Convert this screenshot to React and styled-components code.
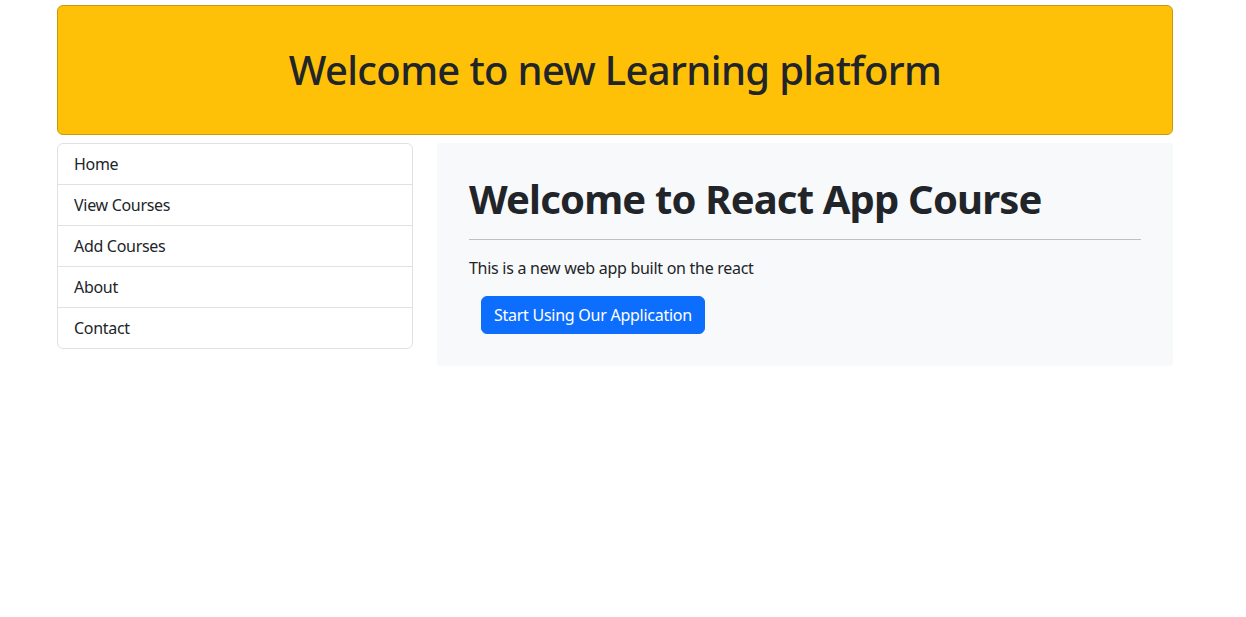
import React from "react";
import styled, { createGlobalStyle } from "styled-components";

const Global = createGlobalStyle`
  * { box-sizing: border-box; }
  html, body { margin: 0; background: #fff; }
  body { font-family: "Noto Sans", "Open Sans", sans-serif; font-size: 16px; line-height: 1.5; color: #212529; }
`;
const Container = styled.div`
  width: 1116px;
  margin: 0 0 0 57px;
  padding-top: 5px;
`;
const Banner = styled.header`
  height: 130px;
  background: #ffc107;
  border: 1px solid #c79a0b;
  border-radius: 6px;
  display: flex;
  align-items: center;
  justify-content: center;
`;
const BannerTitle = styled.h1`
  margin: 0;
  font-size: 40px;
  font-weight: 500;
  line-height: 48px;
  letter-spacing: -0.66px;
`;
const Columns = styled.div`
  display: grid;
  grid-template-columns: 356px 736px;
  column-gap: 24px;
  margin-top: 8px;
  align-items: start;
`;
const Menu = styled.nav`
  border: 1px solid #dfe2e5;
  border-radius: 6px;
  display: flex;
  flex-direction: column;
`;
const MenuItem = styled.a`
  display: block;
  padding: 8px 16px;
  color: #212529;
  border-top: ${(p) => (p.$first ? "none" : "1px solid #dfe2e5")};
  letter-spacing: -0.3px;
`;
const Jumbo = styled.main`
  background: #f8f9fa;
  padding: 32px;
  height: 223px;
  border-radius: 2px;
`;
const Title = styled.h2`
  margin: 0;
  font-size: 40px;
  font-weight: 700;
  line-height: 47px;
  padding-bottom: 1px;
  letter-spacing: -0.83px;
`;
const Rule = styled.hr`
  margin: 16px 0;
  border: 0;
  border-top: 1px solid #bfc0c1;
`;
const Lead = styled.p`
  margin: 0 0 16px;
  letter-spacing: -0.28px;
`;
const Action = styled.div`
  padding-left: 12px;
`;
const Button = styled.button`
  height: 38px;
  padding: 6px 12px;
  background: #0d6efd;
  color: #fff;
  border: 1px solid #0d6efd;
  border-radius: 6px;
  font: inherit;
  letter-spacing: -0.26px;
`;

const items = ["Home", "View Courses", "Add Courses", "About", "Contact"];

export default function App() {
  return (
    <Container>
      <Global />
      <Banner>
        <BannerTitle>Welcome to new Learning platform</BannerTitle>
      </Banner>
      <Columns>
        <Menu>
          {items.map((t, i) => (
            <MenuItem key={t} $first={i === 0}>{t}</MenuItem>
          ))}
        </Menu>
        <Jumbo>
          <Title>Welcome to React App Course</Title>
          <Rule />
          <Lead>This is a new web app built on the react</Lead>
          <Action>
            <Button>Start Using Our Application</Button>
          </Action>
        </Jumbo>
      </Columns>
    </Container>
  );
}
